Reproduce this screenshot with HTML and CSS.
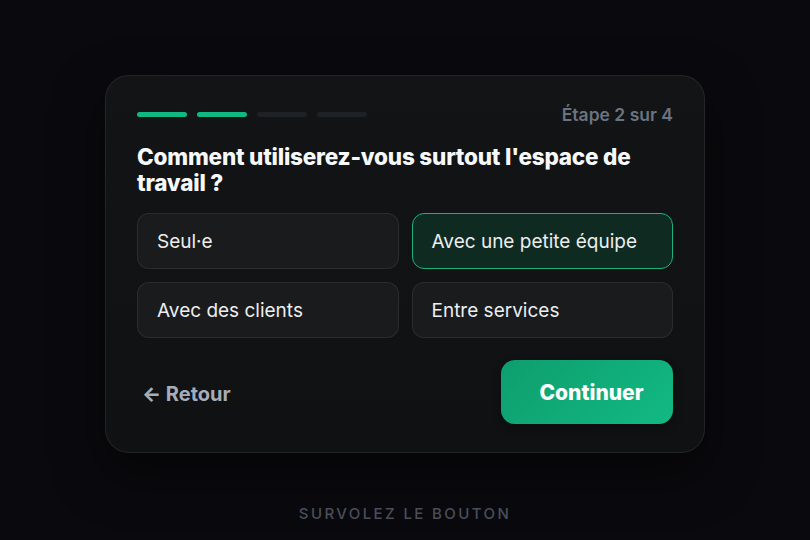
FILE: index.html
```html
<!DOCTYPE html>
<html lang="fr">
<head>
<meta charset="utf-8">
<link rel="stylesheet" href="styles.css">
</head>
<body>
<main class="stage">
  <section class="card">
    <div class="top">
      <div class="progress">
        <span class="seg seg-on"></span>
        <span class="seg seg-on"></span>
        <span class="seg"></span>
        <span class="seg"></span>
      </div>
      <span class="step">Étape 2 sur 4</span>
    </div>
    <h1 class="title">Comment utiliserez-vous surtout l'espace de travail ?</h1>
    <div class="options">
      <button class="opt">Seul·e</button>
      <button class="opt opt-sel">Avec une petite équipe</button>
      <button class="opt">Avec des clients</button>
      <button class="opt">Entre services</button>
    </div>
    <div class="footer">
      <button class="back"><span class="arrow">←</span> Retour</button>
      <button class="next">Continuer</button>
    </div>
  </section>
  <p class="hint">Survolez le bouton</p>
</main>
</body>
</html>
```
FILE: styles.css
```css
* { box-sizing: border-box; }
html, body { margin: 0; padding: 0; }
body {
  background: #0a0a0e;
  font-family: Inter, "Noto Sans", sans-serif;
  width: 810px;
  height: 540px;
  overflow: hidden;
}
.stage {
  display: flex;
  flex-direction: column;
  align-items: center;
  padding-top: 75px;
}
.card {
  width: 600px;
  height: 378px;
  border-radius: 24px;
  border: 1px solid rgba(255,255,255,0.08);
  background: linear-gradient(180deg, #121416 0%, #0f1112 100%);
  box-shadow: 0 20px 50px rgba(0,0,0,0.5);
  padding: 28px 31px 27px;
  display: flex;
  flex-direction: column;
}
.top {
  display: flex;
  justify-content: space-between;
  align-items: center;
  height: 20px;
}
.progress { display: flex; gap: 10px; }
.seg {
  width: 50px;
  height: 5px;
  border-radius: 3px;
  background: #1f2224;
}
.seg-on { background: #10b981; }
.step {
  color: #6b7380;
  font-size: 17.5px;
  font-weight: 600;
}
.title {
  margin: 20px 0 0;
  color: #f7f8f9;
  font-size: 22.5px;
  line-height: 26px;
  font-weight: 800;
  letter-spacing: -0.2px;
}
.options {
  margin-top: 17px;
  display: grid;
  grid-template-columns: 1fr 1fr;
  gap: 13px;
}
.opt {
  height: 56px;
  border-radius: 12px;
  border: 1px solid rgba(255,255,255,0.08);
  background: #191b1d;
  color: #eceef0;
  font-family: inherit;
  font-size: 19px;
  text-align: left;
  padding: 0 19px;
}
.opt-sel {
  background: #0e2a21;
  border: 1.5px solid #1fb07f;
}
.footer {
  margin-top: 22px;
  display: flex;
  justify-content: space-between;
  align-items: center;
}
.back {
  background: none;
  border: 0;
  color: #a5adb8;
  font-family: inherit;
  font-size: 20px;
  font-weight: 700;
  padding: 0 0 0 5px;
  margin-top: 4px;
}
.arrow { font-size: 20px; font-weight: 800; }
.next {
  width: 172px;
  height: 64px;
  border: 0;
  border-radius: 14px;
  background: linear-gradient(135deg, #0e9e6e 0%, #12b982 100%);
  color: #ffffff;
  font-family: inherit;
  font-size: 21px;
  font-weight: 800;
  padding: 0 0 0 9px;
  box-shadow: 0 4px 10px rgba(0,0,0,0.3);
}
.hint {
  margin: 51px 0 0;
  color: #4a4e5a;
  font-size: 15px;
  line-height: 20px;
  letter-spacing: 2.4px;
  text-transform: uppercase;
  font-weight: 500;
}
```
